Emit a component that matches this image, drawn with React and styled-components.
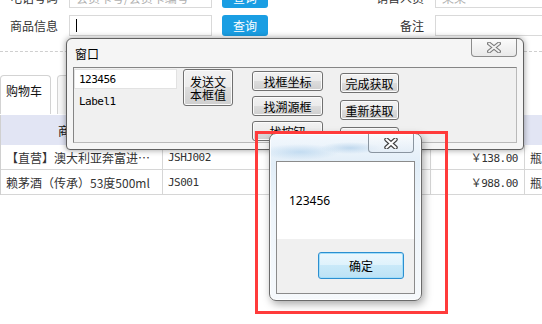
import styled, { createGlobalStyle } from "styled-components";

const GlobalStyle = createGlobalStyle`
  html, body {
    margin: 0;
    padding: 0;
    background: #ffffff;
  }
  body {
    font-family: "Noto Sans CJK SC", "Noto Sans", sans-serif;
    font-size: 12px;
    color: #222;
  }
`;

export default function App() {
  return (
    <Page>
      <GlobalStyle />
      <Form>
        <FormRow>
          <FieldLabel $w={58}>电话号码</FieldLabel>
          <TextInput $w={143}>会员卡号/会员卡编号</TextInput>
          <QueryButton>查询</QueryButton>
          <FieldLabel $w={156}>销售人员</FieldLabel>
          <TextInput $w={130}>某某</TextInput>
        </FormRow>
        <FormRow>
          <FieldLabel $w={58}>商品信息</FieldLabel>
          <TextInput $w={143}>
            <Caret />
          </TextInput>
          <QueryButton>查询</QueryButton>
          <FieldLabel $w={156}>备注</FieldLabel>
          <TextInput $w={130} />
        </FormRow>
      </Form>
      <Dashed />
      <TabBar>
        <Tab $active>购物车</Tab>
        <Tab>商品列表</Tab>
      </TabBar>
      <Table>
        <HeadCell>商品名称</HeadCell>
        <HeadCell>商品编码</HeadCell>
        <HeadCell>规格</HeadCell>
        <HeadCell>数量</HeadCell>
        <HeadCell>单价</HeadCell>
        <HeadCell>单位</HeadCell>

        <Cell>【直营】澳大利亚奔富进…</Cell>
        <Cell $mono>JSHJ002</Cell>
        <Cell>750ml</Cell>
        <Cell>1</Cell>
        <Cell $mono $right>￥138.00</Cell>
        <Cell>瓶</Cell>

        <Cell>赖茅酒（传承）53度500ml</Cell>
        <Cell $mono>JS001</Cell>
        <Cell>500ml</Cell>
        <Cell>1</Cell>
        <Cell $mono $right>￥988.00</Cell>
        <Cell>瓶</Cell>
      </Table>

      <Window>
        <TitleBar>
          <WindowTitle>窗口</WindowTitle>
          <CloseButton>
            <svg width="14" height="11" viewBox="0 0 14 11">
              <path d="M2 1.5 L12 9.5 M12 1.5 L2 9.5" stroke="#7a7a7a" strokeWidth="4" strokeLinecap="round" />
              <path d="M2 1.5 L12 9.5 M12 1.5 L2 9.5" stroke="#f2f2f2" strokeWidth="1.8" strokeLinecap="round" />
            </svg>
          </CloseButton>
        </TitleBar>
        <Client>
          <Column $left={0} $top={1} $gap={6}>
            <WinTextBox>123456</WinTextBox>
            <WinLabel>Label1</WinLabel>
          </Column>
          <Column $left={6} $top={1} $gap={0}>
            <WinButton $w={50} $h={37}>
              发送文
              <br />
              本框值
            </WinButton>
          </Column>
          <Column $left={19} $top={3} $gap={5}>
            <WinButton $w={71}>找框坐标</WinButton>
            <WinButton $w={71}>找溯源框</WinButton>
            <WinButton $w={71}>找按钮</WinButton>
          </Column>
          <Column $left={17} $top={5} $gap={7}>
            <WinButton $w={59}>完成获取</WinButton>
            <WinButton $w={59}>重新获取</WinButton>
            <WinButton $w={59}>关闭</WinButton>
          </Column>
        </Client>
      </Window>

      <MsgBox>
        <MsgTitle>
          <MsgClose>
            <svg width="14" height="11" viewBox="0 0 14 11">
              <path d="M2.5 1.5 L11.5 9.5 M11.5 1.5 L2.5 9.5" stroke="#3d3d3d" strokeWidth="4.4" strokeLinecap="round" />
              <path d="M2.5 1.5 L11.5 9.5 M11.5 1.5 L2.5 9.5" stroke="#ffffff" strokeWidth="2.2" strokeLinecap="round" />
            </svg>
          </MsgClose>
        </MsgTitle>
        <MsgInner>
          <MsgText>123456</MsgText>
          <MsgFooter>
            <OkButton>确定</OkButton>
          </MsgFooter>
        </MsgInner>
      </MsgBox>

      <Highlight />
    </Page>
  );
}

const Page = styled.div`
  position: relative;
  width: 542px;
  height: 324px;
  overflow: hidden;
  background: #ffffff;
`;

const Form = styled.div`
  display: flex;
  flex-direction: column;
  gap: 7px;
  margin-top: -13px;
`;

const FormRow = styled.div`
  display: flex;
  align-items: center;
  height: 21px;
`;

const FieldLabel = styled.div`
  width: ${(p) => p.$w}px;
  flex: none;
  margin-right: 11px;
  text-align: right;
  font-size: 12px;
  color: #333;
  white-space: nowrap;
`;

const TextInput = styled.div`
  width: ${(p) => p.$w}px;
  flex: none;
  height: 21px;
  box-sizing: border-box;
  border: 1px solid #d9d9d9;
  background: #fff;
  padding-left: 6px;
  display: flex;
  align-items: center;
  color: #b0b0b0;
  font-size: 12px;
  white-space: nowrap;
  overflow: hidden;
`;

const Caret = styled.span`
  width: 1px;
  height: 13px;
  background: #000;
`;

const QueryButton = styled.div`
  width: 46px;
  height: 21px;
  flex: none;
  margin-left: 10px;
  background: #1a9ee3;
  border-radius: 3px;
  color: #fff;
  font-size: 12px;
  display: flex;
  align-items: center;
  justify-content: center;
`;

const Dashed = styled.div`
  margin-top: 15px;
  border-top: 1px dashed #cfcfcf;
`;

const TabBar = styled.div`
  margin-top: 23px;
  height: 40px;
  display: flex;
  gap: 6px;
`;

const Tab = styled.div`
  width: ${(p) => (p.$active ? 51 : 90)}px;
  height: 39px;
  box-sizing: border-box;
  border: 1px solid #d3d3d3;
  border-bottom: none;
  border-radius: 4px 4px 0 0;
  background: ${(p) => (p.$active ? "#ffffff" : "#f7f7f7")};
  padding: 7px 0 0 ${(p) => (p.$active ? 5 : 16)}px;
  font-size: 12px;
  line-height: 16px;
  color: #111;
  white-space: nowrap;
`;

const Table = styled.div`
  display: grid;
  grid-template-columns: 162px 112px 80px 76px 94px 60px;
  border-left: 1px solid #d0d0d0;
  width: 584px;
`;

const HeadCell = styled.div`
  height: 30px;
  background: #e2e5f4;
  display: flex;
  align-items: center;
  justify-content: center;
  font-size: 12px;
  color: #111;
`;

const Cell = styled.div`
  height: 25px;
  box-sizing: border-box;
  border-right: 1px solid #d6d6d6;
  border-bottom: 1px solid #d6d6d6;
  display: flex;
  align-items: center;
  justify-content: ${(p) => (p.$right ? "flex-end" : "flex-start")};
  padding: ${(p) => (p.$right ? "0 6px 0 0" : "0 0 0 5px")};
  font-family: ${(p) =>
    p.$mono ? '"DejaVu Sans Mono", "Noto Sans CJK SC", monospace' : '"Noto Sans CJK SC", sans-serif'};
  font-size: ${(p) => (p.$mono ? "11px" : "12px")};
  letter-spacing: ${(p) => (p.$mono ? "-0.5px" : "0")};
  color: #333;
  white-space: nowrap;
  overflow: hidden;
`;

const Window = styled.div`
  position: absolute;
  left: 66px;
  top: 38px;
  width: 458px;
  height: 112px;
  box-sizing: border-box;
  border: 1px solid #606060;
  border-radius: 6px 6px 4px 4px;
  background: #f5f5f5;
  box-shadow: 0 0 6px rgba(0, 0, 0, 0.4);
  padding: 0 6px 6px;
  display: flex;
  flex-direction: column;
`;

const TitleBar = styled.div`
  height: 28px;
  display: flex;
  justify-content: space-between;
  align-items: flex-start;
`;

const WindowTitle = styled.div`
  padding: 7px 0 0 2px;
  font-size: 12px;
  line-height: 16px;
  color: #000;
`;

const CloseButton = styled.div`
  width: 46px;
  height: 18px;
  box-sizing: border-box;
  border: 1px solid #8c8c8c;
  border-top: none;
  border-radius: 0 0 4px 4px;
  background: linear-gradient(#fbfbfb, #e9e9e9);
  display: flex;
  align-items: center;
  justify-content: center;
`;

const Client = styled.div`
  height: 76px;
  box-sizing: border-box;
  border: 1px solid #858585;
  border-right-color: #b9b9b9;
  border-bottom-color: #b9b9b9;
  background: #f0f0f0;
  display: flex;
  align-items: flex-start;
  overflow: hidden;
`;

const Column = styled.div`
  display: flex;
  flex-direction: column;
  gap: ${(p) => p.$gap}px;
  margin-left: ${(p) => p.$left}px;
  margin-top: ${(p) => p.$top}px;
`;

const WinTextBox = styled.div`
  width: 103px;
  height: 20px;
  box-sizing: border-box;
  border: 1px solid #e2e2e2;
  background: #fff;
  padding-left: 4px;
  display: flex;
  align-items: center;
  font-family: "DejaVu Sans Mono", monospace;
  font-size: 11px;
  letter-spacing: -0.5px;
  color: #000;
`;

const WinLabel = styled.div`
  padding-left: 5px;
  font-family: "DejaVu Sans Mono", monospace;
  font-size: 11px;
  letter-spacing: -0.5px;
  line-height: 14px;
  color: #000;
`;

const WinButton = styled.div`
  width: ${(p) => p.$w}px;
  height: ${(p) => p.$h || 20}px;
  box-sizing: border-box;
  border: 1px solid #707070;
  border-radius: 3px;
  background: linear-gradient(#f2f2f2 0%, #ebebeb 50%, #dddddd 50%, #cfcfcf 100%);
  box-shadow: inset 0 0 0 1px #fbfbfb;
  display: flex;
  align-items: center;
  justify-content: center;
  text-align: center;
  font-size: 12px;
  line-height: 13px;
  color: #000;
`;

const MsgBox = styled.div`
  position: absolute;
  left: 269px;
  top: 133px;
  width: 153px;
  height: 168px;
  box-sizing: border-box;
  border: 1px solid #6b6b6b;
  border-radius: 7px;
  background:
    radial-gradient(ellipse 40px 8px at 30px 18px, rgba(170, 205, 235, 0.6), transparent),
    radial-gradient(ellipse 30px 6px at 80px 14px, rgba(150, 190, 225, 0.5), transparent),
    linear-gradient(180deg, #f3f8fd 0%, #e2eef8 18%, #eef5fb 45%, #f6f9fc 100%);
  box-shadow: 2px 3px 8px rgba(0, 0, 0, 0.35), inset 0 0 0 1px rgba(255, 255, 255, 0.8);
  padding: 0 6px 6px;
  display: flex;
  flex-direction: column;
  z-index: 2;
`;

const MsgTitle = styled.div`
  height: 27px;
  display: flex;
  justify-content: flex-end;
  align-items: flex-start;
`;

const MsgClose = styled.div`
  width: 46px;
  height: 19px;
  margin-right: 1px;
  box-sizing: border-box;
  border: 1px solid #8a95a0;
  border-top: none;
  border-radius: 0 0 4px 4px;
  background: linear-gradient(rgba(255, 255, 255, 0.6), rgba(225, 235, 245, 0.6));
  display: flex;
  align-items: center;
  justify-content: center;
`;

const MsgInner = styled.div`
  flex: 1;
  border: 1px solid #8b8b8b;
  display: flex;
  flex-direction: column;
`;

const MsgText = styled.div`
  height: 77px;
  box-sizing: border-box;
  background: #fff;
  padding: 31px 0 0 12px;
  font-family: "Noto Sans", sans-serif;
  font-size: 12px;
  line-height: 16px;
  color: #000;
`;

const MsgFooter = styled.div`
  flex: 1;
  background: #f0f0f0;
  display: flex;
  justify-content: flex-end;
  align-items: flex-start;
  padding: 13px 10px 0 0;
`;

const OkButton = styled.div`
  width: 86px;
  height: 27px;
  box-sizing: border-box;
  border: 1px solid #2c8fd0;
  border-radius: 3px;
  background: linear-gradient(#ecf7fd 0%, #def2fc 50%, #c9e9f9 50%, #bce2f5 100%);
  box-shadow: inset 0 0 0 1px #a3defa;
  display: flex;
  align-items: center;
  justify-content: center;
  font-size: 12px;
  color: #000;
`;

const Highlight = styled.div`
  position: absolute;
  left: 255px;
  top: 131px;
  width: 193px;
  height: 183px;
  box-sizing: border-box;
  border: 3px solid #ff3b3b;
  z-index: 3;
  pointer-events: none;
`;
